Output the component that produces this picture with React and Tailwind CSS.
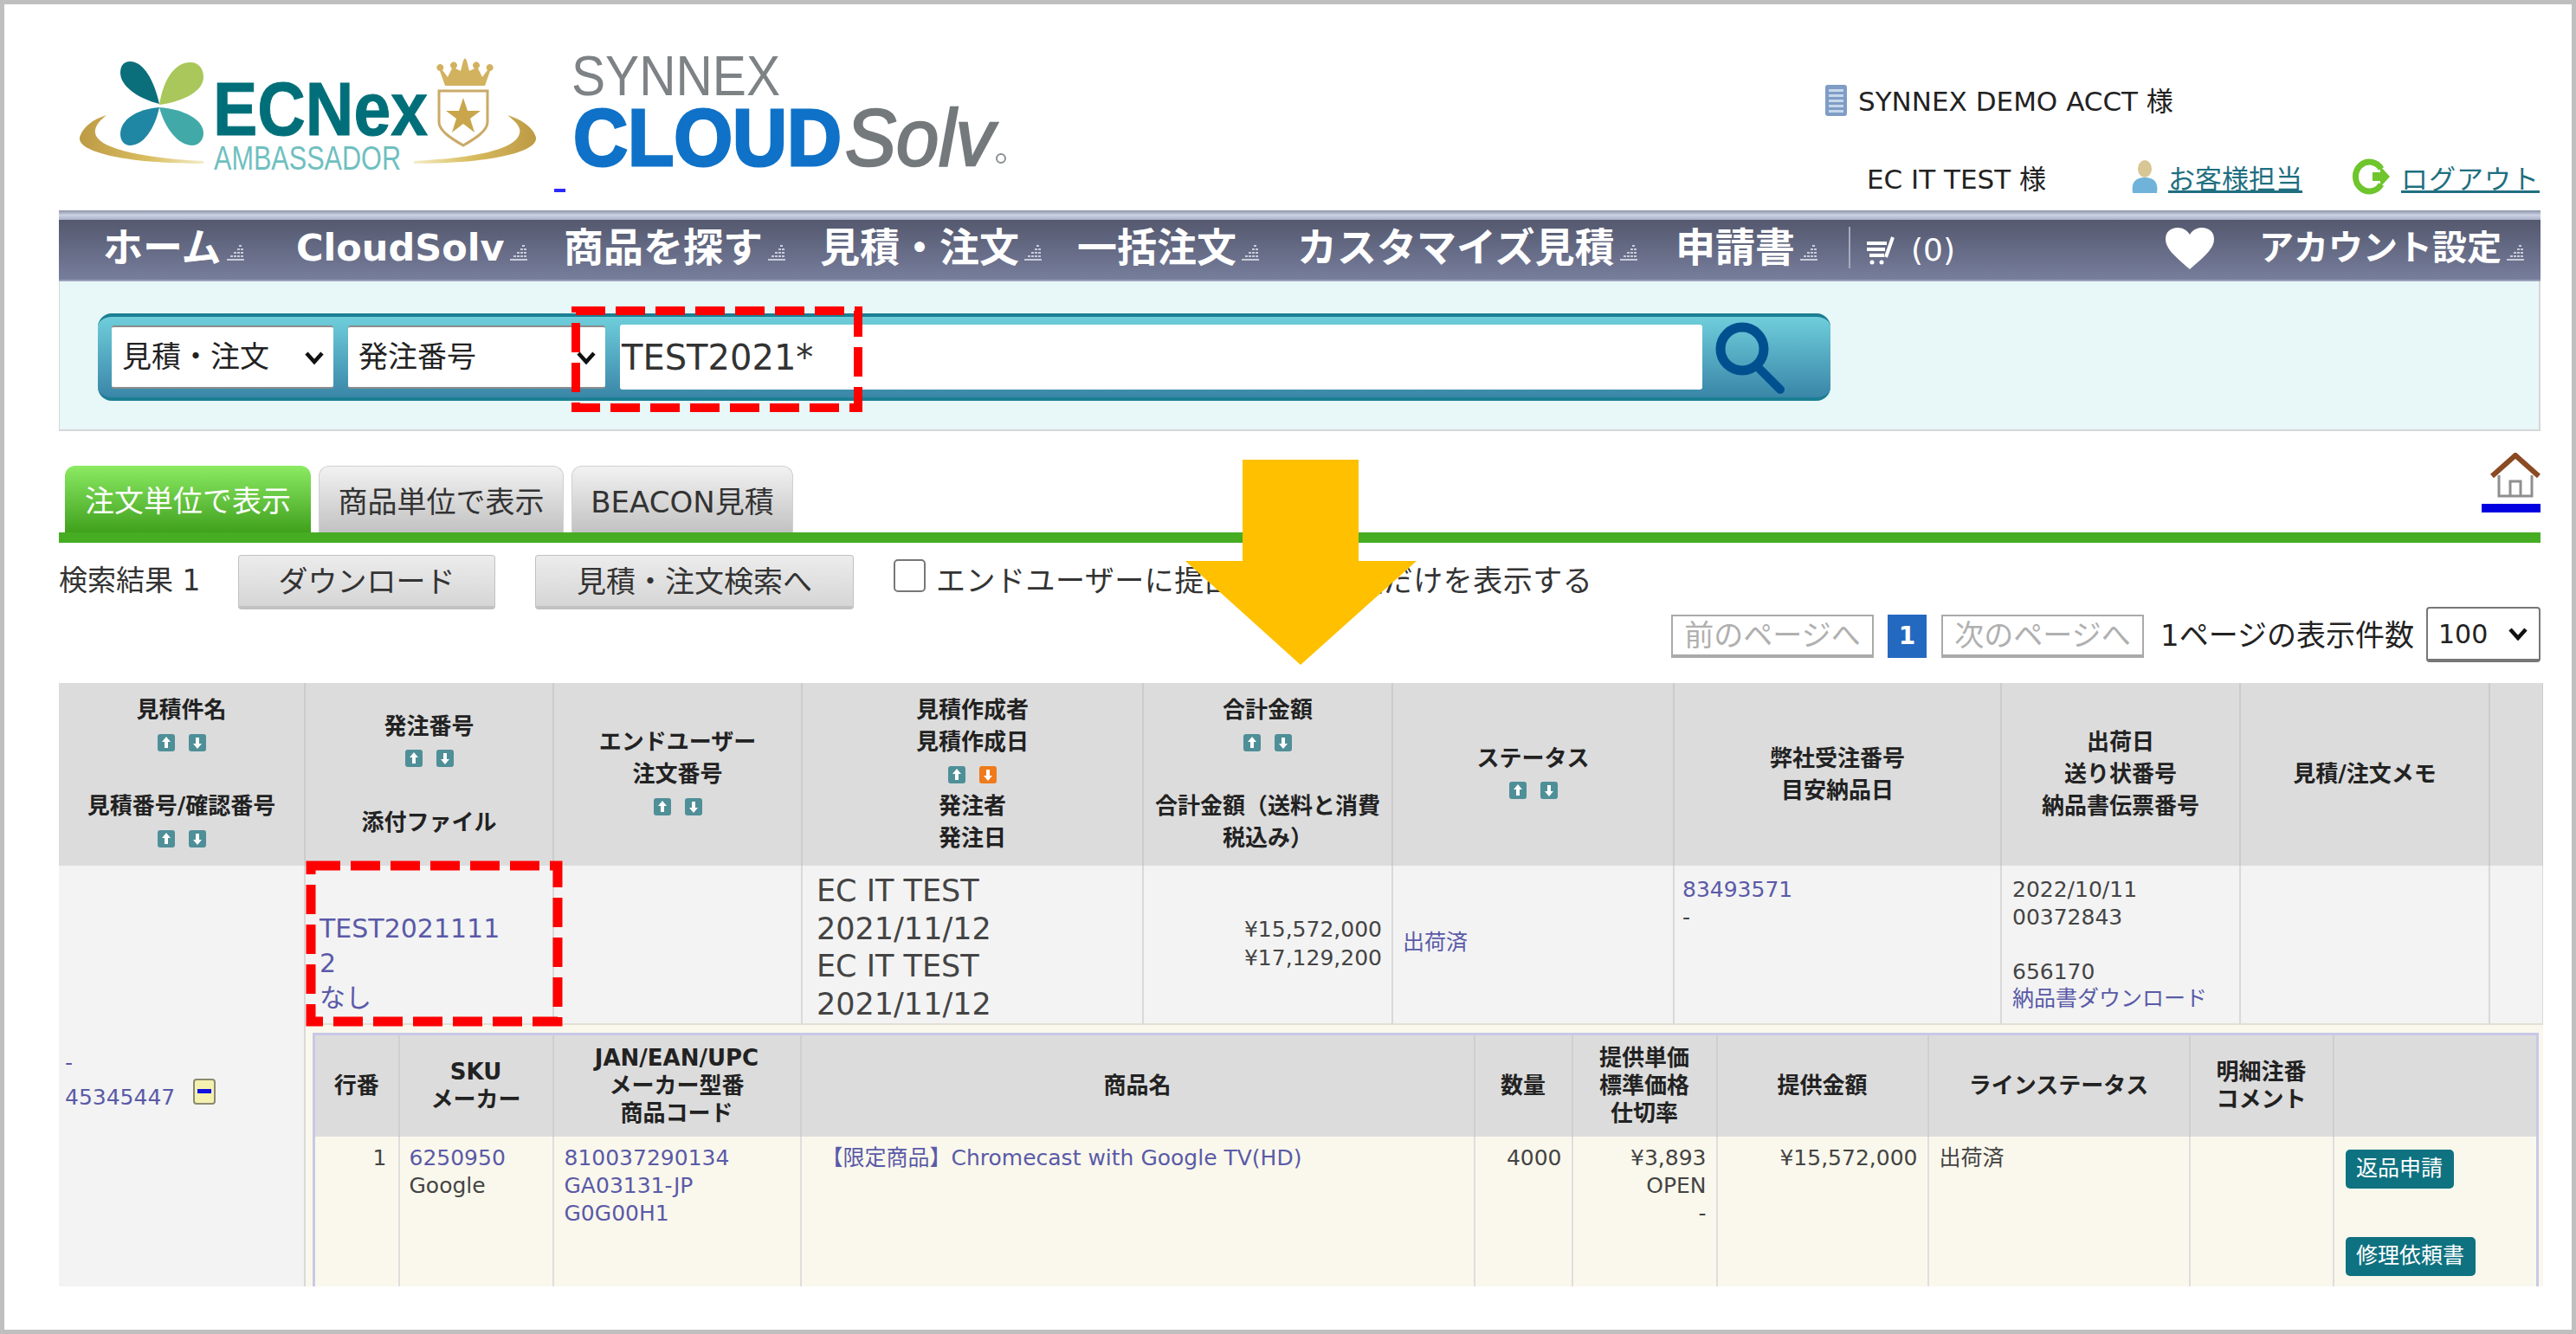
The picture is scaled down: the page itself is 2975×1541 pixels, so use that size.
import React from "react";

const FONT = { fontFamily: '"DejaVu Sans","Noto Sans CJK JP",sans-serif' };

function TinyArrow() {
  return (
    <svg width="25" height="22" viewBox="0 0 25 22" className="flex-none ml-[3px] mt-[12px]">
      <g fill="#c9ccd8">
        <rect x="17" y="2" width="3" height="2" /><rect x="15" y="6" width="3" height="2" /><rect x="19" y="6" width="3" height="2" />
        <rect x="11" y="10" width="3" height="2" /><rect x="15" y="10" width="3" height="2" /><rect x="19" y="10" width="3" height="2" />
        <rect x="7" y="14" width="3" height="2" /><rect x="11" y="14" width="3" height="2" /><rect x="15" y="14" width="3" height="2" /><rect x="19" y="14" width="3" height="2" />
        <rect x="3" y="18" width="20" height="2" />
      </g>
    </svg>
  );
}

function NavItem({ label, w, text = "text-[46px]" }) {
  return (
    <div className={`flex flex-none items-center -mt-[5px] ${w}`}>
      <span className={`${text} leading-[60px] font-bold text-white whitespace-nowrap`}>{label}</span>
      <TinyArrow />
    </div>
  );
}

function Sort({ up = "#4f8f98", down = "#4f8f98" }) {
  const arrow = (d, c, k) => (
    <svg key={k} width="20" height="20" viewBox="0 0 20 20">
      <rect width="20" height="20" rx="3" fill={c} />
      <path d={d} fill="#fff" />
    </svg>
  );
  return (
    <div className="flex justify-center gap-[16px] h-[37px] items-center">
      {arrow("M10 3l5 6h-3v7H8V9H5z", up, "u")}
      {arrow("M10 17l5-6h-3V4H8v7H5z", down, "d")}
    </div>
  );
}

function L({ children }) {
  return <div className="h-[37px] leading-[37px] whitespace-nowrap">{children}</div>;
}

const TH = "border-r-2 border-[#cccccc] align-middle text-center p-0 font-bold text-[26px] text-[#222] bg-[#dcdcdc]";
const TD = "border-r-2 border-[#d9d9d9] align-top p-0 text-[25px] text-[#444] bg-[#f3f3f3]";
const NTH = "border-r-2 border-[#cfcfcf] align-middle text-center p-0 font-bold text-[26px] leading-[32px] text-[#222]";
const NTD = "border-r-2 border-[#dedede] align-top pt-[9px] text-[25px] leading-[32px] text-[#444]";
const LINK = "text-[#5a5aa8]";

function Logos() {
  return (
    <svg width="1110" height="238" viewBox="68 5 1110 238" className="flex-none">
      <defs>
        <linearGradient id="ringL" x1="0" y1="0" x2="1" y2="0">
          <stop offset="0" stopColor="#bd9a45" /><stop offset="0.55" stopColor="#d9bd5f" /><stop offset="1" stopColor="#f3ecc8" />
        </linearGradient>
        <linearGradient id="ringR" x1="1" y1="0" x2="0" y2="0">
          <stop offset="0" stopColor="#bd9a45" /><stop offset="0.55" stopColor="#d9bd5f" /><stop offset="1" stopColor="#f3ecc8" />
        </linearGradient>
      </defs>
      <path d="M93 156c4-10 14-18 30-23-10 8-14 14-13 21 3 16 45 28 125 32v3c-90 0-152-14-142-33z" fill="url(#ringL)" />
      <path d="M618 156c-4-10-16-18-32-23 10 8 16 14 14 21-3 16-40 28-122 32v3c88 0 150-14 140-33z" fill="url(#ringR)" />
      <path d="M184 120c-24-6-45-20-45-36 0-8 4-13 11-13 16 0 28 22 34 49z" fill="#0b6f7b" />
      <path d="M184 121c4-26 16-49 36-49 9 0 15 7 15 17 0 16-22 28-51 32z" fill="#a9c75a" />
      <path d="M184 124c-26 2-45 14-45 31 0 8 5 13 11 13 16 0 29-20 34-44z" fill="#1f86a3" />
      <path d="M184 124c28 2 51 14 51 30 0 8-6 14-13 14-16 0-32-20-38-44z" fill="#41aaa9" />
      <text x="246" y="156" fontFamily='"Liberation Sans",sans-serif' fontWeight="700" fontSize="88" fill="#006f79" stroke="#006f79" strokeWidth="1" textLength="248" lengthAdjust="spacingAndGlyphs">ECNex</text>
      <text x="247" y="196" fontFamily='"Liberation Sans",sans-serif' fontSize="38" fill="#6fc0bf" textLength="216" lengthAdjust="spacingAndGlyphs">AMBASSADOR</text>
      <path d="M508 82a4 4 0 1 1 3-1l6 8 5-10a4 4 0 1 1 4 0l6 3 3-12 2-3 2 3 3 12 6-3a4 4 0 1 1 4 0l5 10 6-8a4 4 0 1 1 3 1l-6 17h-46z" fill="#d2b25f" />
      <path d="M507 105h56v36c0 10-14 19-28 27-14-8-28-17-28-27z" fill="#fff" stroke="#c9aa68" strokeWidth="3" />
      <path d="M535 113l5 15h15l-12 9 5 16-13-10-13 10 5-16-12-9h15z" fill="#c9a64c" />
      <text x="660" y="110" fontFamily='"Liberation Sans",sans-serif' fontSize="64" fill="#7d8285" textLength="241" lengthAdjust="spacingAndGlyphs">SYNNEX</text>
      <text x="662" y="191" fontFamily='"Liberation Sans",sans-serif' fontWeight="700" fontSize="92" fill="#0f72c8" stroke="#0f72c8" strokeWidth="3" textLength="310" lengthAdjust="spacingAndGlyphs">CLOUD</text>
      <text x="976" y="191" fontFamily='"Liberation Sans",sans-serif' fontStyle="italic" fontSize="92" fill="#74797c" stroke="#74797c" strokeWidth="2.5" textLength="172" lengthAdjust="spacingAndGlyphs">Solv</text>
      <circle cx="1156" cy="183" r="5" fill="none" stroke="#8a8f92" strokeWidth="2" />
      <rect x="640" y="218" width="13" height="4" fill="#2a2aff" />
    </svg>
  );
}

function UserInfo() {
  return (
    <div className="w-[827px] flex-none text-[#222]">
      <div className="flex items-end mt-[88px] h-[42px]">
        <svg width="27" height="38" viewBox="0 0 27 38" className="flex-none">
          <rect x="1" y="1" width="25" height="36" rx="3" fill="#7f9dc5" />
          <g fill="#c7d8ec">
            <rect x="5" y="6" width="17" height="3" /><rect x="5" y="12" width="17" height="3" /><rect x="5" y="18" width="17" height="3" /><rect x="5" y="24" width="17" height="3" /><rect x="5" y="30" width="17" height="3" />
          </g>
        </svg>
        <span className="ml-[12px] text-[31px] leading-[36px] whitespace-nowrap">SYNNEX DEMO ACCT 様</span>
      </div>
      <div className="flex items-end mt-[46px] h-[44px] pl-[49px]">
        <span className="w-[305px] flex-none text-[31px] leading-[36px] whitespace-nowrap">EC IT TEST 様</span>
        <svg width="32" height="40" viewBox="0 0 32 40" className="flex-none">
          <ellipse cx="16" cy="10" rx="8" ry="10" fill="#d8c694" />
          <path d="M2 38c-2-12 3-18 14-18s16 6 14 18z" fill="#6fb3da" />
        </svg>
        <span className="ml-[11px] w-[208px] flex-none text-[31px] leading-[36px] underline text-[#1f6f80] whitespace-nowrap">お客様担当</span>
        <svg width="48" height="42" viewBox="0 0 48 42" className="flex-none">
          <path d="M38 12A16 17 0 1 0 38 30" fill="none" stroke="#6fc52c" strokeWidth="7" />
          <path d="M28 16h9V9l11 12-11 12v-7h-9z" fill="#6fc52c" />
        </svg>
        <span className="ml-[13px] text-[31px] leading-[36px] underline text-[#1f6f80] whitespace-nowrap tracking-[1px]">ログアウト</span>
      </div>
    </div>
  );
}

function Nav() {
  return (
    <div className="h-[82px] flex flex-col">
      <div className="h-[11px] flex-none bg-gradient-to-b from-[#8d93a8] via-[#ccd2e4] to-[#a9afc6]" />
      <div className="flex-1 flex items-center pl-[51px] bg-gradient-to-b from-[#54596f] to-[#777e9c] border-b-2 border-[#9aa0b8]">
        <NavItem label="ホーム" w="w-[223px]" />
        <NavItem label="CloudSolv" w="w-[309px]" text="text-[43px]" />
        <NavItem label="商品を探す" w="w-[296px]" />
        <NavItem label="見積・注文" w="w-[297px]" />
        <NavItem label="一括注文" w="w-[254px]" />
        <NavItem label="カスタマイズ見積" w="w-[437px]" />
        <NavItem label="申請書" w="w-[200px]" />
        <div className="w-[2px] h-[48px] -mt-[5px] bg-[#a6abbd] flex-none" />
        <svg width="34" height="36" viewBox="0 0 34 36" className="flex-none ml-[17px]">
          <path d="M2 10h23M2 17h21M5 24h17M32 3L24 26" stroke="#fff" strokeWidth="4" fill="none" />
          <circle cx="8" cy="32" r="2.5" fill="#fff" /><circle cx="19" cy="32" r="2.5" fill="#fff" />
        </svg>
        <span className="ml-[19px] text-[36px] text-white leading-[44px] whitespace-nowrap">(0)</span>
        <svg width="58" height="50" viewBox="0 0 58 50" className="flex-none ml-[242px] -mt-[4px]">
          <path d="M29 49C9 32 1 24 1 14 1 6 7 1 15 1c6 0 11 3 14 8 3-5 8-8 14-8 8 0 14 5 14 13 0 10-8 18-28 35z" fill="#fff" />
        </svg>
        <div className="ml-[51px] flex items-center -mt-[5px]">
          <span className="text-[40px] leading-[60px] font-bold text-white whitespace-nowrap">アカウント設定</span>
          <TinyArrow />
        </div>
      </div>
    </div>
  );
}

function Select({ children, w }) {
  return (
    <div className={`${w} h-[73px] flex-none bg-white border-t-2 border-b-2 border-[#8c8c8c] rounded-[3px] flex items-center justify-between pl-[12px] pr-[10px]`}>
      <span className="text-[34px] text-[#222] whitespace-nowrap">{children}</span>
      <svg width="24" height="16" viewBox="0 0 24 16" className="flex-none">
        <path d="M3 3l9 10 9-10" fill="none" stroke="#111" strokeWidth="4.5" />
      </svg>
    </div>
  );
}

function SearchPanel() {
  return (
    <div className="h-[173px] bg-[#e8f7f8] border-r-2 border-b-2 border-l border-[#d6d6d6] pt-[37px] pl-[44px]">
      <div className="w-[2001px] h-[101px] rounded-[16px] flex items-center pl-[16px] border-t-4 border-b-4 border-[#1b7f93] bg-gradient-to-b from-[#6fcedb] to-[#3a86a8]">
        <Select w="w-[256px]">見積・注文</Select>
        <div className="w-[17px] flex-none" />
        <Select w="w-[297px]">発注番号</Select>
        <div className="w-[17px] flex-none" />
        <div className="w-[1250px] h-[75px] bg-white rounded-[3px] flex-none flex items-center pl-[2px]">
          <span className="text-[40px] text-[#333] leading-[50px]">TEST2021*</span>
        </div>
        <svg width="82" height="84" viewBox="0 0 82 84" className="flex-none ml-[14px]">
          <circle cx="32" cy="32" r="25" fill="none" stroke="#00508f" strokeWidth="11" />
          <path d="M49 52L76 79" stroke="#00508f" strokeWidth="10" strokeLinecap="round" />
        </svg>
      </div>
    </div>
  );
}

function Tab({ children, active, w }) {
  return (
    <div className={`${w} h-[77px] flex-none rounded-t-[12px] flex items-center justify-center text-[34px] whitespace-nowrap pt-[6px] ${active ? "bg-gradient-to-b from-[#8ceb62] to-[#3fa11b] text-white" : "bg-gradient-to-b from-[#f2f2f2] to-[#c2c2c2] text-[#333] border-t border-x border-[#d0d0d0]"}`}>
      {children}
    </div>
  );
}

function TabsBar() {
  return (
    <div className="mt-[38px] relative">
      <div className="flex h-[79px] items-end pl-[7px] gap-[9px] justify-between">
        <div className="flex gap-[9px]">
          <Tab active w="w-[284px]">注文単位で表示</Tab>
          <Tab w="w-[283px]">商品単位で表示</Tab>
          <Tab w="w-[256px]">BEACON見積</Tab>
        </div>
        <div className="flex flex-col items-end self-start -mt-[13px] w-[68px]">
          <svg width="58" height="52" viewBox="0 0 58 52">
            <path d="M2 27L29 3l27 24" fill="none" stroke="#8a4a22" strokeWidth="6" />
            <path d="M10 26v24h38V26" fill="#fff" stroke="#8f8f8f" strokeWidth="3" />
            <path d="M23 50V33h12v17" fill="none" stroke="#8f8f8f" strokeWidth="3" />
          </svg>
          <div className="w-[68px] h-[10px] bg-[#0000e0] mt-[7px]" />
        </div>
      </div>
      <div className="h-[12px] bg-[#46ad23]" />
    </div>
  );
}

function Btn({ children, w }) {
  return (
    <div className={`${w} h-[63px] flex-none rounded-[4px] border border-[#c2c2c2] border-b-4 bg-gradient-to-b from-[#ececec] to-[#d6d6d6] flex items-center justify-center text-[34px] text-[#333] whitespace-nowrap pt-[2px]`}>
      {children}
    </div>
  );
}

function Toolbar() {
  return (
    <div className="h-[76px] pt-[14px] flex items-start text-[#333]">
      <span className="w-[207px] flex-none leading-[60px] whitespace-nowrap text-[33px]">検索結果 1</span>
      <Btn w="w-[297px]">ダウンロード</Btn>
      <div className="w-[46px] flex-none" />
      <Btn w="w-[368px]">見積・注文検索へ</Btn>
      <div className="w-[37px] h-[38px] ml-[46px] mt-[5px] flex-none bg-white border-2 border-[#777] rounded-[5px]" />
      <span className="ml-[12px] leading-[60px] whitespace-nowrap text-[34px] tracking-[0.5px]">エンドユーザーに提出された見積だけを表示する</span>
    </div>
  );
}

function PageBox({ children, w }) {
  return (
    <div className={`${w} h-[50px] flex-none bg-white border-2 border-[#aaaaaa] border-b-4 flex items-center justify-center text-[#b0b0b0] text-[34px] whitespace-nowrap`}>
      {children}
    </div>
  );
}

function Pager() {
  return (
    <div className="h-[64px] -mt-[2px] flex items-start justify-end text-[#222]">
      <div className="flex items-start pt-[9px]">
        <PageBox w="w-[234px]">前のページへ</PageBox>
        <div className="w-[45px] h-[50px] ml-[16px] flex-none bg-[#2469c0] flex items-center justify-center text-white text-[28px] font-bold">1</div>
        <div className="w-[17px] flex-none" />
        <PageBox w="w-[234px]">次のページへ</PageBox>
      </div>
      <span className="ml-[19px] w-[307px] flex-none leading-[66px] text-[34px] whitespace-nowrap">1ページの表示件数</span>
      <div className="w-[132px] h-[64px] flex-none bg-white border-2 border-[#777] rounded-[4px] border-b-4 flex items-center justify-between px-[12px]">
        <span className="text-[30px]">100</span>
        <svg width="24" height="16" viewBox="0 0 24 16"><path d="M3 3l9 10 9-10" fill="none" stroke="#111" strokeWidth="4.5" /></svg>
      </div>
    </div>
  );
}

function NestedTable() {
  return (
    <table className="table-fixed w-[2568px] border-t-[3px] border-x-[3px] border-[#c8c8e8]">
      <colgroup>
        <col className="w-[98px]" /><col className="w-[178px]" /><col className="w-[286px]" /><col className="w-[778px]" /><col className="w-[113px]" /><col className="w-[167px]" /><col className="w-[244px]" /><col className="w-[302px]" /><col className="w-[166px]" /><col className="w-[236px]" />
      </colgroup>
      <thead>
        <tr className="h-[118px] bg-[#dcdcdc]">
          <th className={NTH}>行番</th>
          <th className={NTH}>SKU<br />メーカー</th>
          <th className={NTH}>JAN/EAN/UPC<br />メーカー型番<br />商品コード</th>
          <th className={NTH}>商品名</th>
          <th className={NTH}>数量</th>
          <th className={NTH}>提供単価<br />標準価格<br />仕切率</th>
          <th className={NTH}>提供金額</th>
          <th className={NTH}>ラインステータス</th>
          <th className={NTH}>明細注番<br />コメント</th>
          <th className={NTH}></th>
        </tr>
      </thead>
      <tbody>
        <tr className="bg-[#faf8ec] h-[240px]">
          <td className={`${NTD} text-right pr-[13px]`}>1</td>
          <td className={`${NTD} pl-[11px]`}><div className={LINK}>6250950</div><div>Google</div></td>
          <td className={`${NTD} pl-[12px]`}><div className={LINK}>810037290134</div><div className={LINK}>GA03131-JP</div><div className={LINK}>G0G00H1</div></td>
          <td className={`${NTD} pl-[23px] whitespace-nowrap`}><div className={LINK}>【限定商品】Chromecast with Google TV(HD)</div></td>
          <td className={`${NTD} text-right pr-[11px]`}>4000</td>
          <td className={`${NTD} text-right pr-[11px]`}><div>¥3,893</div><div>OPEN</div><div>-</div></td>
          <td className={`${NTD} text-right pr-[11px]`}>¥15,572,000</td>
          <td className={`${NTD} pl-[12px]`}>出荷済</td>
          <td className={NTD}></td>
          <td className={`${NTD} pl-[13px] pt-[15px]`}>
            <div className="w-[125px] h-[45px] rounded-[5px] bg-[#0f7280] text-white text-[25px] flex items-center justify-center whitespace-nowrap">返品申請</div>
            <div className="w-[150px] h-[45px] mt-[56px] rounded-[5px] bg-[#0f7280] text-white text-[25px] flex items-center justify-center whitespace-nowrap">修理依頼書</div>
          </td>
        </tr>
      </tbody>
    </table>
  );
}

function MainTable() {
  return (
    <div className="h-[697px] overflow-hidden mt-[24px] w-[2869px]">
      <table className="table-fixed w-[2869px]">
        <colgroup>
          <col className="w-[284px]" /><col className="w-[287px]" /><col className="w-[287px]" /><col className="w-[394px]" /><col className="w-[288px]" /><col className="w-[325px]" /><col className="w-[378px]" /><col className="w-[276px]" /><col className="w-[288px]" /><col className="w-[62px]" />
        </colgroup>
        <thead>
          <tr className="h-[211px]">
            <th className={TH}><L>見積件名</L><Sort /><L>&nbsp;</L><L>見積番号/確認番号</L><Sort /></th>
            <th className={TH}><L>発注番号</L><Sort /><L>&nbsp;</L><L>添付ファイル</L></th>
            <th className={TH}><L>エンドユーザー</L><L>注文番号</L><Sort /></th>
            <th className={TH}><L>見積作成者</L><L>見積作成日</L><Sort down="#ef7a1c" /><L>発注者</L><L>発注日</L></th>
            <th className={TH}><L>合計金額</L><Sort /><L>&nbsp;</L><L>合計金額（送料と消費</L><L>税込み）</L></th>
            <th className={TH}><L>ステータス</L><Sort /></th>
            <th className={TH}><L>弊社受注番号</L><L>目安納品日</L></th>
            <th className={TH}><L>出荷日</L><L>送り状番号</L><L>納品書伝票番号</L></th>
            <th className={TH}><L>見積/注文メモ</L></th>
            <th className={TH}></th>
          </tr>
        </thead>
        <tbody>
          <tr className="h-[181px]">
            <td rowSpan={2} className={`${TD} pl-[7px] pt-[212px] leading-[32px]`}>
              <div className={LINK}>-</div>
              <div className="flex items-center mt-[8px]">
                <span className={LINK}>45345447</span>
                <svg width="26" height="30" viewBox="0 0 26 30" className="flex-none ml-[21px] -mt-[14px]">
                  <rect x="1" y="1" width="24" height="28" rx="3" fill="#f4f0b0" stroke="#8a8a70" strokeWidth="2" />
                  <rect x="5" y="12" width="16" height="5" fill="#1010e0" />
                </svg>
              </div>
            </td>
            <td className={`${TD} pl-[16px] pt-[53px] text-[30px] leading-[40px]`}><div className={LINK}>TEST2021111</div><div className={LINK}>2</div><div className={LINK}>なし</div></td>
            <td className={TD}></td>
            <td className={`${TD} pl-[16px] pt-[8px] text-[35px] leading-[43.5px] whitespace-nowrap`}><div>EC IT TEST</div><div>2021/11/12</div><div>EC IT TEST</div><div>2021/11/12</div></td>
            <td className={`${TD} text-right pr-[11px] pt-[57px] leading-[33px]`}><div>¥15,572,000</div><div>¥17,129,200</div></td>
            <td className={`${TD} pl-[11px] pt-[73px] leading-[32px]`}><div className={LINK}>出荷済</div></td>
            <td className={`${TD} pl-[9px] pt-[12px] leading-[32px]`}><div className={LINK}>83493571</div><div>-</div></td>
            <td className={`${TD} pl-[12px] pt-[12px] leading-[31.5px] whitespace-nowrap`}><div>2022/10/11</div><div>00372843</div><div>&nbsp;</div><div>656170</div><div className={LINK}>納品書ダウンロード</div></td>
            <td className={TD}></td>
            <td className={TD}></td>
          </tr>
          <tr>
            <td colSpan={9} className="p-0 pl-[8px] pt-[9px] bg-[#faf8ec] border-t-2 border-[#e0e0d8] align-top">
              <NestedTable />
            </td>
          </tr>
        </tbody>
      </table>
    </div>
  );
}

function Overlay() {
  return (
    <svg className="absolute top-0 left-0 pointer-events-none" width="2965" height="1531" viewBox="5 5 2965 1531">
      <path d="M1435 531H1569V648H1636L1502 768L1369 648H1435Z" fill="#ffc000" />
      <rect x="665" y="359" width="326" height="112" fill="none" stroke="#ff0000" strokeWidth="10" strokeDasharray="34 12" />
      <rect x="359" y="1000" width="285" height="180" fill="none" stroke="#ff0000" strokeWidth="11" strokeDasharray="34 12" />
    </svg>
  );
}

export default function App() {
  return (
    <div style={FONT} className="relative w-[2975px] h-[1541px] box-border border-[5px] border-[#bfbfbf] bg-white overflow-hidden">
      <div className="pl-[63px] pr-[36px]">
        <div className="h-[238px] flex justify-between">
          <Logos />
          <UserInfo />
        </div>
        <Nav />
        <SearchPanel />
        <TabsBar />
        <Toolbar />
        <Pager />
        <MainTable />
      </div>
      <Overlay />
    </div>
  );
}
